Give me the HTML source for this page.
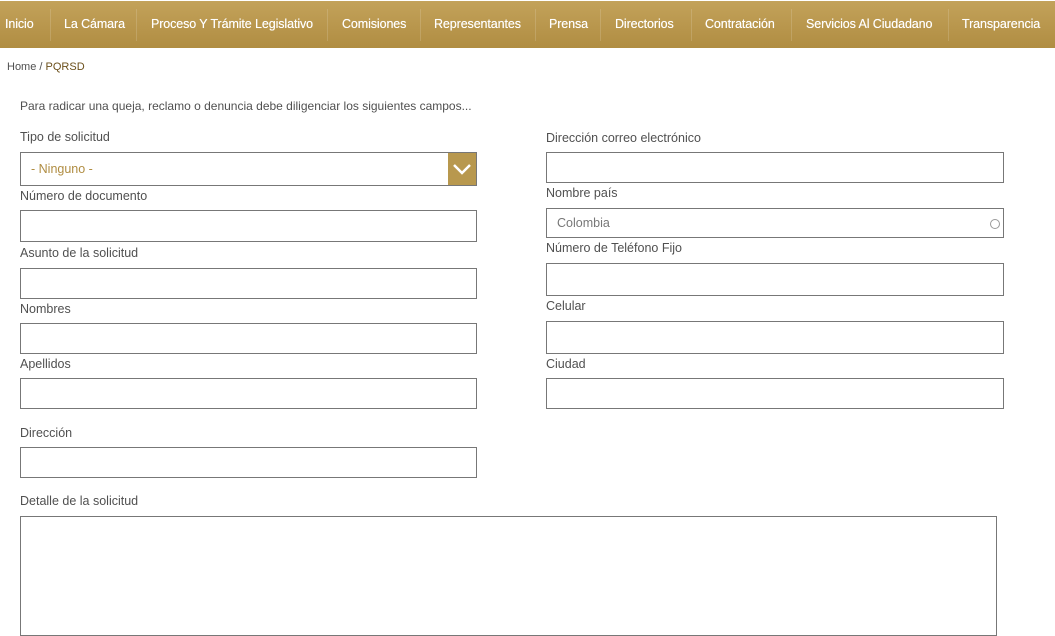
<!DOCTYPE html>
<html><head><meta charset="utf-8"><style>
*{box-sizing:border-box;margin:0;padding:0}
body{width:1055px;height:623px;overflow:hidden;background:#fff;font-family:"Liberation Sans",sans-serif;color:#555;position:relative}
.nav{position:absolute;left:0;top:1px;width:1055px;height:47px;background:linear-gradient(#c3a25a,#b08d42)}
.nav span{position:absolute;top:16px;color:#fff;font-size:12.5px;white-space:nowrap;letter-spacing:-0.1px;text-shadow:0 0 0.4px #fff}
.sep{position:absolute;top:8px;width:1px;height:32px;background:rgba(255,255,255,.15)}
.t{position:absolute;font-size:12.5px;color:#505050;white-space:nowrap}
.f{position:absolute;border:1px solid #777;background:#fff}
</style></head><body>
<div class="nav">
<span style="left:5px">Inicio</span><div class="sep" style="left:50px"></div>
<span style="left:64px">La Cámara</span><div class="sep" style="left:136px"></div>
<span style="left:151px">Proceso Y Trámite Legislativo</span><div class="sep" style="left:327px"></div>
<span style="left:342px">Comisiones</span><div class="sep" style="left:420px"></div>
<span style="left:434px">Representantes</span><div class="sep" style="left:535px"></div>
<span style="left:549px">Prensa</span><div class="sep" style="left:600px"></div>
<span style="left:615px">Directorios</span><div class="sep" style="left:691px"></div>
<span style="left:705px">Contratación</span><div class="sep" style="left:791px"></div>
<span style="left:806px">Servicios Al Ciudadano</span><div class="sep" style="left:948px"></div>
<span style="left:962px">Transparencia</span>
</div>
<div class="t" style="left:7px;top:61px;font-size:11px">Home / <span style="color:#6b4f1a">PQRSD</span></div>
<div class="t" style="left:20px;top:99px;font-size:12px">Para radicar una queja, reclamo o denuncia debe diligenciar los siguientes campos...</div>

<div class="t" style="left:20px;top:130px">Tipo de solicitud</div>
<div class="f" style="left:20px;top:152px;width:457px;height:34px"><span style="position:absolute;left:10px;top:9px;font-size:12.5px;color:#b08d42">- Ninguno -</span>
<div style="position:absolute;right:0;top:0;width:28px;height:32px;background:#b8984e"><svg width="28" height="32"><path d="M6 12 L14 20 L22 12" stroke="#fff" stroke-width="2.5" fill="none"/></svg></div></div>
<div class="t" style="left:20px;top:189px">Número de documento</div>
<div class="f" style="left:20px;top:210px;width:457px;height:32px"></div>
<div class="t" style="left:20px;top:246px">Asunto de la solicitud</div>
<div class="f" style="left:20px;top:268px;width:457px;height:31px"></div>
<div class="t" style="left:20px;top:302px">Nombres</div>
<div class="f" style="left:20px;top:323px;width:457px;height:31px"></div>
<div class="t" style="left:20px;top:357px">Apellidos</div>
<div class="f" style="left:20px;top:378px;width:457px;height:31px"></div>
<div class="t" style="left:20px;top:426px">Dirección</div>
<div class="f" style="left:20px;top:447px;width:457px;height:31px"></div>
<div class="t" style="left:20px;top:494px">Detalle de la solicitud</div>
<div class="f" style="left:20px;top:516px;width:977px;height:120px"></div>

<div class="t" style="left:546px;top:131px">Dirección correo electrónico</div>
<div class="f" style="left:546px;top:152px;width:458px;height:31px"></div>
<div class="t" style="left:546px;top:186px">Nombre país</div>
<div class="f" style="left:546px;top:208px;width:458px;height:30px"><span style="position:absolute;left:10px;top:7px;font-size:12.5px;color:#777">Colombia</span><span style="position:absolute;right:3px;top:10px;width:10px;height:10px;border:1px solid #999;border-radius:50%"></span></div>
<div class="t" style="left:546px;top:241px">Número de Teléfono Fijo</div>
<div class="f" style="left:546px;top:263px;width:458px;height:33px"></div>
<div class="t" style="left:546px;top:299px">Celular</div>
<div class="f" style="left:546px;top:321px;width:458px;height:33px"></div>
<div class="t" style="left:546px;top:357px">Ciudad</div>
<div class="f" style="left:546px;top:378px;width:458px;height:31px"></div>
</body></html>
